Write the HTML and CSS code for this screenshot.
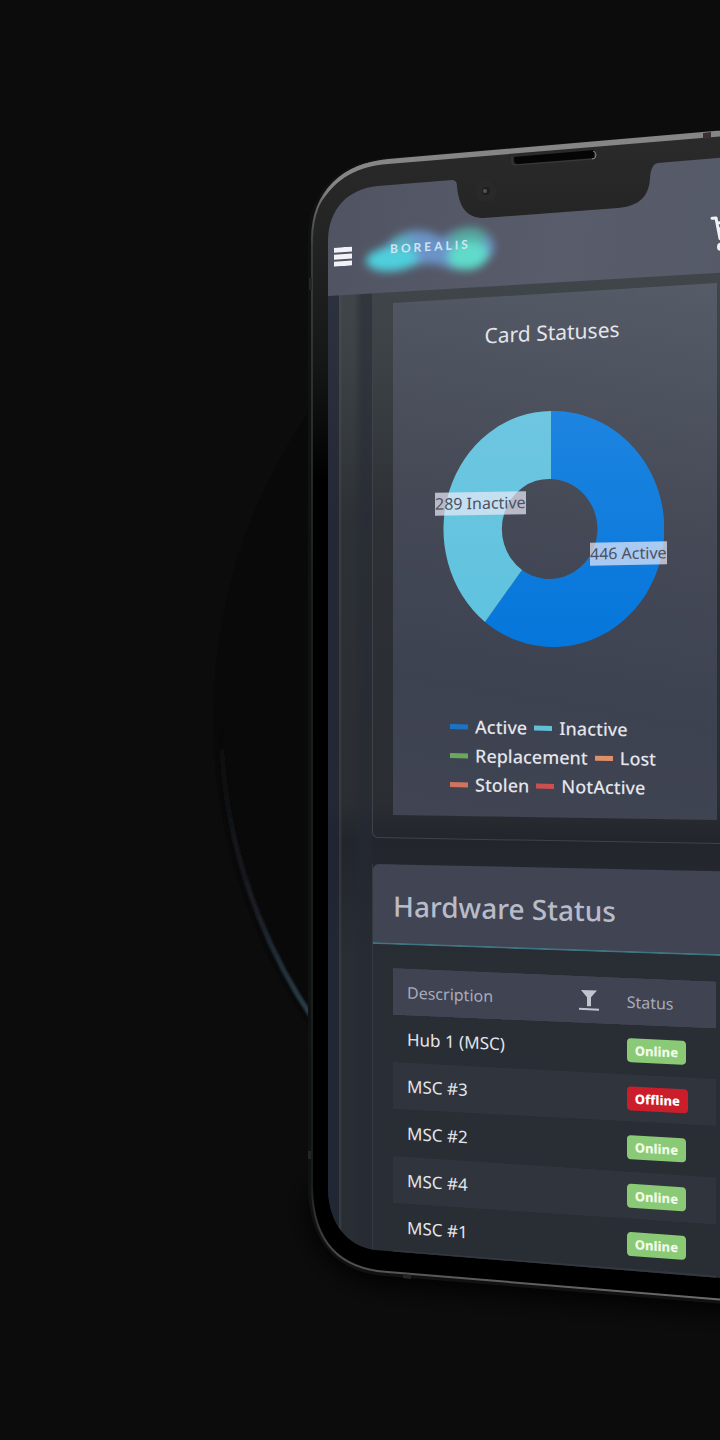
FILE: index.html
```html
<!DOCTYPE html>
<html lang="en">
<head>
<meta charset="utf-8">
<meta name="viewport" content="width=device-width, initial-scale=1">
<title>Borealis</title>
<link rel="stylesheet" href="styles.css">
</head>
<body>
<div class="scene">
  <svg class="device" viewBox="0 0 720 1440" aria-hidden="true">
    <defs>
      <linearGradient id="ring" gradientUnits="userSpaceOnUse" x1="220" y1="720" x2="310" y2="1030">
        <stop offset="0" stop-color="#15161a" stop-opacity="0"/>
        <stop offset=".2" stop-color="#131418" stop-opacity=".6"/>
        <stop offset=".6" stop-color="#1c1e26"/>
        <stop offset="1" stop-color="#2b4552"/>
      </linearGradient>
      <linearGradient id="bezel" gradientUnits="userSpaceOnUse" x1="0" y1="130" x2="0" y2="520">
        <stop offset="0" stop-color="#2b2b2b"/>
        <stop offset=".25" stop-color="#242424"/>
        <stop offset=".6" stop-color="#151716"/>
        <stop offset=".9" stop-color="#000"/>
      </linearGradient>
      <linearGradient id="rim" gradientUnits="userSpaceOnUse" x1="0" y1="130" x2="0" y2="1300">
        <stop offset="0" stop-color="#969696"/>
        <stop offset=".04" stop-color="#858585"/>
        <stop offset=".1" stop-color="#3a3c3c"/>
        <stop offset=".4" stop-color="#1c1e1e"/>
        <stop offset=".9" stop-color="#1a1d1d"/>
        <stop offset=".97" stop-color="#505050"/>
        <stop offset="1" stop-color="#6c6c6c"/>
      </linearGradient>
      <filter id="soft" x="-20%" y="-20%" width="140%" height="140%"><feGaussianBlur stdDeviation="1"/></filter>
      <filter id="shade" x="-20%" y="-20%" width="140%" height="140%"><feGaussianBlur stdDeviation="14"/></filter>
    </defs>
    <circle cx="753" cy="719" r="540" fill="#090909"/>
    <circle cx="755" cy="719" r="534" fill="none" stroke="url(#ring)" stroke-width="5" filter="url(#soft)"/>
    <path d="M1100 1342 L390 1284 C340 1280 308 1250 308 1190Z" fill="#060606" filter="url(#shade)"/>
    <path d="M1100 1335 L385 1276 C338 1273 309 1242 308 1188 V236 C309 190 340 162 385 158 L1100 99Z" fill="#101111"/>
    <path d="M1100 1331 L388 1272 C338 1269 313 1240 312 1188 V238 C313 192 343 163 388 161 L1100 104Z" fill="url(#bezel)" stroke="url(#rim)" stroke-width="2"/>
    <path d="M320 204 C334 174 356 163 388 159 L1100 98 V105 L388 164 C358 166 336 178 320 204Z" fill="#868686"/>
    <path d="M703 133 l8 -1 v6 l-8 1z" fill="#3c3032"/>
    <path d="M309 278 h3 v12 h-3z M308 1151 h3 v8 h-3z M403 1274 l8 1 v4 l-8 -1z" fill="#242626"/>
    <path d="M514 157 L594 150 V158 L518 164 Q514 164 514 160z" fill="#050505"/>
    <path d="M512 156 v6 q0 3 3 3 L594 159" fill="none" stroke="#3a3a3a"/>
    <path d="M593 151 q3 1 3 4 q0 4 -4 4" fill="none" stroke="#888"/>
    <circle cx="486" cy="191" r="11" fill="#292929"/>
    <circle cx="486" cy="191" r="4" fill="#1f1e20"/>
    <circle cx="485" cy="191" r="2" fill="#5d4f52"/>
  </svg>

  <div class="screen">
    <header class="topbar">
      <button class="icon-button menu" aria-label="Menu">
        <svg width="18" height="19" viewBox="0 0 18 19" fill="#f2f2f6"><path d="M0 0h18v5H0zM0 7h18v5H0zM0 14h18v5H0z"/></svg>
      </button>
      <a class="logo" href="#">
        <svg class="aurora" width="146" height="60" viewBox="0 0 146 60" aria-hidden="true">
          <defs><filter id="glow" x="-30%" y="-50%" width="160%" height="200%"><feGaussianBlur stdDeviation="4"/></filter></defs>
          <g filter="url(#glow)">
            <path d="M12 30 Q26 25 38 14 Q60 2 84 18 Q104 4 126 14 Q144 28 130 42 Q104 56 86 46 Q72 40 56 44 Q24 53 12 42Z" fill="#6b94c9"/>
            <ellipse cx="34" cy="36" rx="26" ry="12" fill="#50cfdd"/>
            <ellipse cx="44" cy="20" rx="12" ry="7" fill="#5aaec0"/>
            <ellipse cx="110" cy="20" rx="19" ry="11" fill="#57a8a0"/>
            <ellipse cx="110" cy="37" rx="20" ry="14" fill="#5fdacb"/>
          </g>
        </svg>
        <span class="wordmark">BOREALIS</span>
      </a>
      <button class="icon-button cart" aria-label="Cart">
        <svg width="38" height="36" viewBox="0 0 38 36" fill="none" stroke="#f2f2f6" stroke-width="3" stroke-linecap="round" stroke-linejoin="round"><path d="M2 2h4l4 21h20l5-16H7M8 13h25"/><circle cx="11" cy="31" r="4" fill="#f2f2f6" stroke="none"/><circle cx="29" cy="31" r="4" fill="#f2f2f6" stroke="none"/></svg>
      </button>
    </header>

    <main class="content">
      <section class="panel chart-panel">
        <div class="card">
          <h2 class="card-title">Card Statuses</h2>
          <div class="chart">
            <svg width="222" height="236" viewBox="-110 -118 222 236" role="img" aria-label="446 Active, 289 Inactive">
              <defs>
                <linearGradient id="active" x1="0" y1="0" x2="0" y2="1"><stop offset="0" stop-color="#1d84e0"/><stop offset="1" stop-color="#0576db"/></linearGradient>
                <linearGradient id="inactive" x1="0" y1="0" x2="0" y2="1"><stop offset="0" stop-color="#6ec6e0"/><stop offset="1" stop-color="#5fc3df"/></linearGradient>
              </defs>
              <path d="M-1 -118 A111 118 0 1 1 -67 93 L-30 41 A48 50 0 1 0 -1 -50Z" fill="url(#active)"/>
              <path d="M-1 -118 A108 118 0 0 0 -67 93 L-30 41 A47 50 0 0 1 -1 -50Z" fill="url(#inactive)"/>
            </svg>
            <span class="tag tag-inactive">289 Inactive</span>
            <span class="tag tag-active">446 Active</span>
          </div>
          <ul class="legend">
            <li class="active">Active</li>
            <li class="inactive">Inactive</li>
            <li class="replacement">Replacement</li>
            <li class="lost">Lost</li>
            <li class="stolen">Stolen</li>
            <li class="notactive">NotActive</li>
          </ul>
        </div>
      </section>

      <section class="panel hardware">
        <div class="panel-head"><h2>Hardware Status</h2></div>
        <div class="table-area">
          <table>
            <thead>
              <tr>
                <th class="description"><div class="th-inner">Description
                  <button class="icon-button" aria-label="Filter description"><svg width="20" height="22" viewBox="0 0 20 22" fill="#c3c5ce"><path d="M2 1h16l-6 7v9H8V8zM0 19h20v2H0z"/></svg></button></div></th>
                <th>Status</th>
              </tr>
            </thead>
            <tbody>
              <tr><td>Hub 1 (MSC)</td><td><span class="badge">Online</span></td></tr>
              <tr><td>MSC #3</td><td><span class="badge offline">Offline</span></td></tr>
              <tr><td>MSC #2</td><td><span class="badge">Online</span></td></tr>
              <tr><td>MSC #4</td><td><span class="badge">Online</span></td></tr>
              <tr><td>MSC #1</td><td><span class="badge">Online</span></td></tr>
            </tbody>
          </table>
          <div class="next-row"></div>
        </div>
      </section>
    </main>
  </div>
</div>
</body>
</html>
```
FILE: styles.css
```css
* { box-sizing: border-box; }

body {
  margin: 0;
  background: #0c0c0c;
  color: #e4e5ea;
  font-family: "Noto Sans", "Open Sans", sans-serif;
}

h2 { margin: 0; font-weight: 400; }

.scene {
  position: relative;
  min-height: 1440px;
  overflow: hidden;
}

.device {
  position: absolute;
  top: 0;
  left: 0;
  width: 720px;
  overflow: visible;
}

/* The glass of the phone: rounded corners and the notch */
.screen {
  position: relative;
  padding: 150px 0 0 328px;
  clip-path: path("M328 1190 V240 C329 208 348 189 378 186 L452 180 Q457 180 457 186 C459 208 467 218 484 218 L618 208 C640 206 649 196 650 178 Q651 164 658 163 L1100 126 V1310 L720 1278 L375 1250 C346 1246 329 1222 328 1190Z");
}

.topbar {
  position: relative;
  z-index: 1;
  display: flex;
  align-items: center;
  height: 146px;
  margin-right: -40px;
  padding: 68px 12px 0 6px;
  background: linear-gradient(100deg, #505362, #595c6a 55%, #545968);
  transform: skewY(-3.4deg);
  transform-origin: left bottom;
}

.icon-button {
  display: flex;
  padding: 0;
  border: 0;
  background: none;
}

.logo {
  position: relative;
  display: flex;
  align-items: center;
  margin-left: 6px;
  color: #cfe5f3;
  text-decoration: none;
}

.wordmark {
  position: absolute;
  left: 32px;
  top: 18px;
  font: 700 12px/16px Lato, sans-serif;
  letter-spacing: 3px;
}

.cart { margin-left: auto; }

.content {
  display: flex;
  flex-direction: column;
  gap: 26px;
  margin: -34px -17px 0 0;
  padding-left: 44px;
  background:
    linear-gradient(90deg, rgba(30, 35, 52, .6) 11px, rgba(80, 85, 90, .4) 11px, rgba(80, 85, 90, .4) 12px, transparent 14px, transparent 26px, rgba(36, 40, 50, .5) 34px, rgba(36, 40, 50, .5) 44px, transparent 44px),
    linear-gradient(#41464b, #3d4247 90px, #2d3136 260px, #2a2e33 540px, #22262c 580px, #292d34 700px);
}

.panel { position: relative; }

.chart-panel { padding: 21px 20px 18px 21px; }

.chart-panel::after {
  content: "";
  position: absolute;
  inset: 0;
  border: 1px solid #3f4348;
  border-radius: 6px;
  transform: skewY(1deg);
  transform-origin: left;
  pointer-events: none;
}

.card {
  padding: 34px 0 19px;
  background: linear-gradient(190deg, #565b68, #464a57 42%, #3d4251 75%, #404453);
  clip-path: polygon(0 20px, 100% 0, 100% 100%, 0 calc(100% - 5px));
}

.card-title {
  padding-right: 6px;
  font-size: 21px;
  line-height: 30px;
  text-align: center;
  transform: skewY(-2.8deg);
}

.chart {
  position: relative;
  width: 222px;
  height: 236px;
  margin: 64px auto 0 49px;
}

.tag {
  position: absolute;
  line-height: 23px;
  font-size: 16px;
  color: #4c5160;
  background: rgba(235, 235, 250, .7);
  white-space: nowrap;
  transform: skewY(-1deg);
}

.tag-inactive { left: -7px; top: 81px; }
.tag-active { right: -3px; top: 131px; }

.legend {
  display: flex;
  flex-wrap: wrap;
  column-gap: 7px;
  width: 216px;
  margin: 67px 0 0 57px;
  padding: 0;
  list-style: none;
  font-size: 18px;
  font-weight: 500;
  line-height: 29px;
  transform: skewY(1deg);
}

.legend li {
  display: flex;
  align-items: center;
  gap: 7px;
}

.legend li::before {
  content: "";
  width: 18px;
  height: 5px;
  background: var(--key);
}

.active { --key: #1c73c6; }
.inactive { --key: #62bfd4; }
.replacement { --key: #6aa85c; }
.lost { --key: #e09068; }
.stolen { --key: #d0745f; }
.notactive { --key: #cc4f50; }

.hardware { border-left: 1px solid #353940; }

.panel-head {
  position: relative;
  padding: 20px;
  border-bottom: 2px solid #3f7480;
  border-radius: 6px 0 0;
  background: #404453;
  transform: skewY(2deg);
  transform-origin: left;
}

.panel-head::before {
  content: "";
  position: absolute;
  inset: 0;
  border-radius: 6px 0 0;
  background: #404453;
  transform: skewY(-0.8deg);
  transform-origin: left;
}

.panel-head h2 {
  position: relative;
  color: #b9bcc8;
  font-size: 28px;
  font-weight: 500;
  line-height: 38px;
  transform: skewY(-0.6deg);
}

.table-area { padding: 24px 21px 0 20px; }

table {
  width: 100%;
  border-collapse: collapse;
  table-layout: fixed;
  font-size: 17px;
}

tr {
  height: 47px;
  transform: skewY(var(--tilt));
  transform-origin: left;
}

th, td {
  padding: 0 14px;
  text-align: left;
  font-weight: 400;
}

.description { width: 68%; }

.th-inner {
  display: flex;
  align-items: center;
  justify-content: space-between;
}

thead tr { --tilt: 2.4deg; background: #3f4352; color: #a9acb8; font-size: 16px; }
tbody tr:nth-child(1) { --tilt: 2.7deg; }
tbody tr:nth-child(2) { --tilt: 3deg; }
tbody tr:nth-child(3) { --tilt: 3.4deg; }
tbody tr:nth-child(4) { --tilt: 3.8deg; }
tbody tr:nth-child(5) { --tilt: 4.1deg; }
tbody tr:nth-child(even) { background: #30343c; }

.badge {
  display: inline-block;
  padding: 0 8px;
  border-radius: 4px;
  background: #8aca76;
  color: #f0fbe9;
  font-size: 13px;
  font-weight: 800;
  line-height: 24px;
  vertical-align: middle;
}

.offline { background: #cc1e2a; color: #fff; }

.next-row {
  height: 60px;
  background: #33373f;
  transform: skewY(4.5deg);
  transform-origin: left top;
}
```
